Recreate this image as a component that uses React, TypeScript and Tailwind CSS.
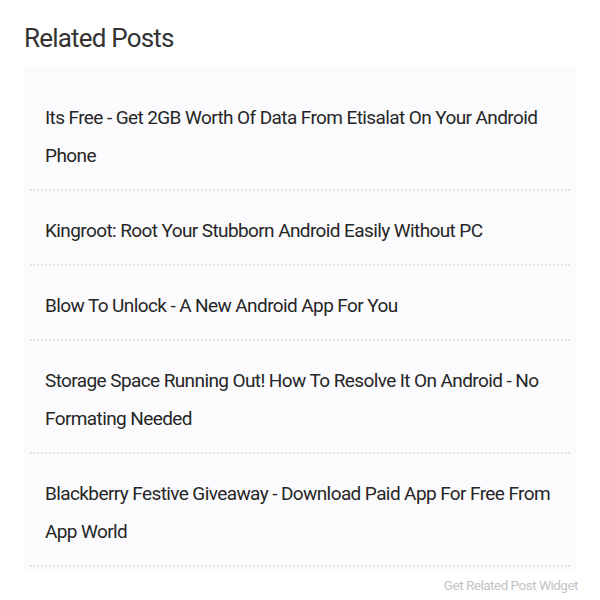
import React from 'react';

const posts = [
  'Its Free - Get 2GB Worth Of Data From Etisalat On Your Android Phone',
  'Kingroot: Root Your Stubborn Android Easily Without PC',
  'Blow To Unlock - A New Android App For You',
  'Storage Space Running Out! How To Resolve It On Android - No Formating Needed',
  'Blackberry Festive Giveaway - Download Paid App For Free From App World',
];

const App = () => {
  return (
    <div className="w-[600px] h-[600px] bg-white px-[24px] pt-[20px] font-['Roboto',sans-serif]">
      <h2 className="text-[26px] leading-[36px] text-[#333] tracking-[-0.8px]">Related Posts</h2>

      <div className="mt-[10px] bg-[#fbfbfd] px-[6px] pt-[12px] pb-[5px]">
        {posts.map((title) => (
          <div key={title} className="border-b-2 border-dotted border-[#e2e2e6] pl-[15px] pr-[8px] pt-[21px] pb-[14px]">
            <a className="block text-[19px] leading-[38px] text-[#262626] tracking-[-0.6px]">{title}</a>
          </div>
        ))}
      </div>

      <div className="text-right text-[13.5px] leading-[16px] text-[#c4c4c4] tracking-[-0.5px] mt-[5px] -mr-[2px]">
        Get Related Post Widget
      </div>
    </div>
  );
};

export default App;
